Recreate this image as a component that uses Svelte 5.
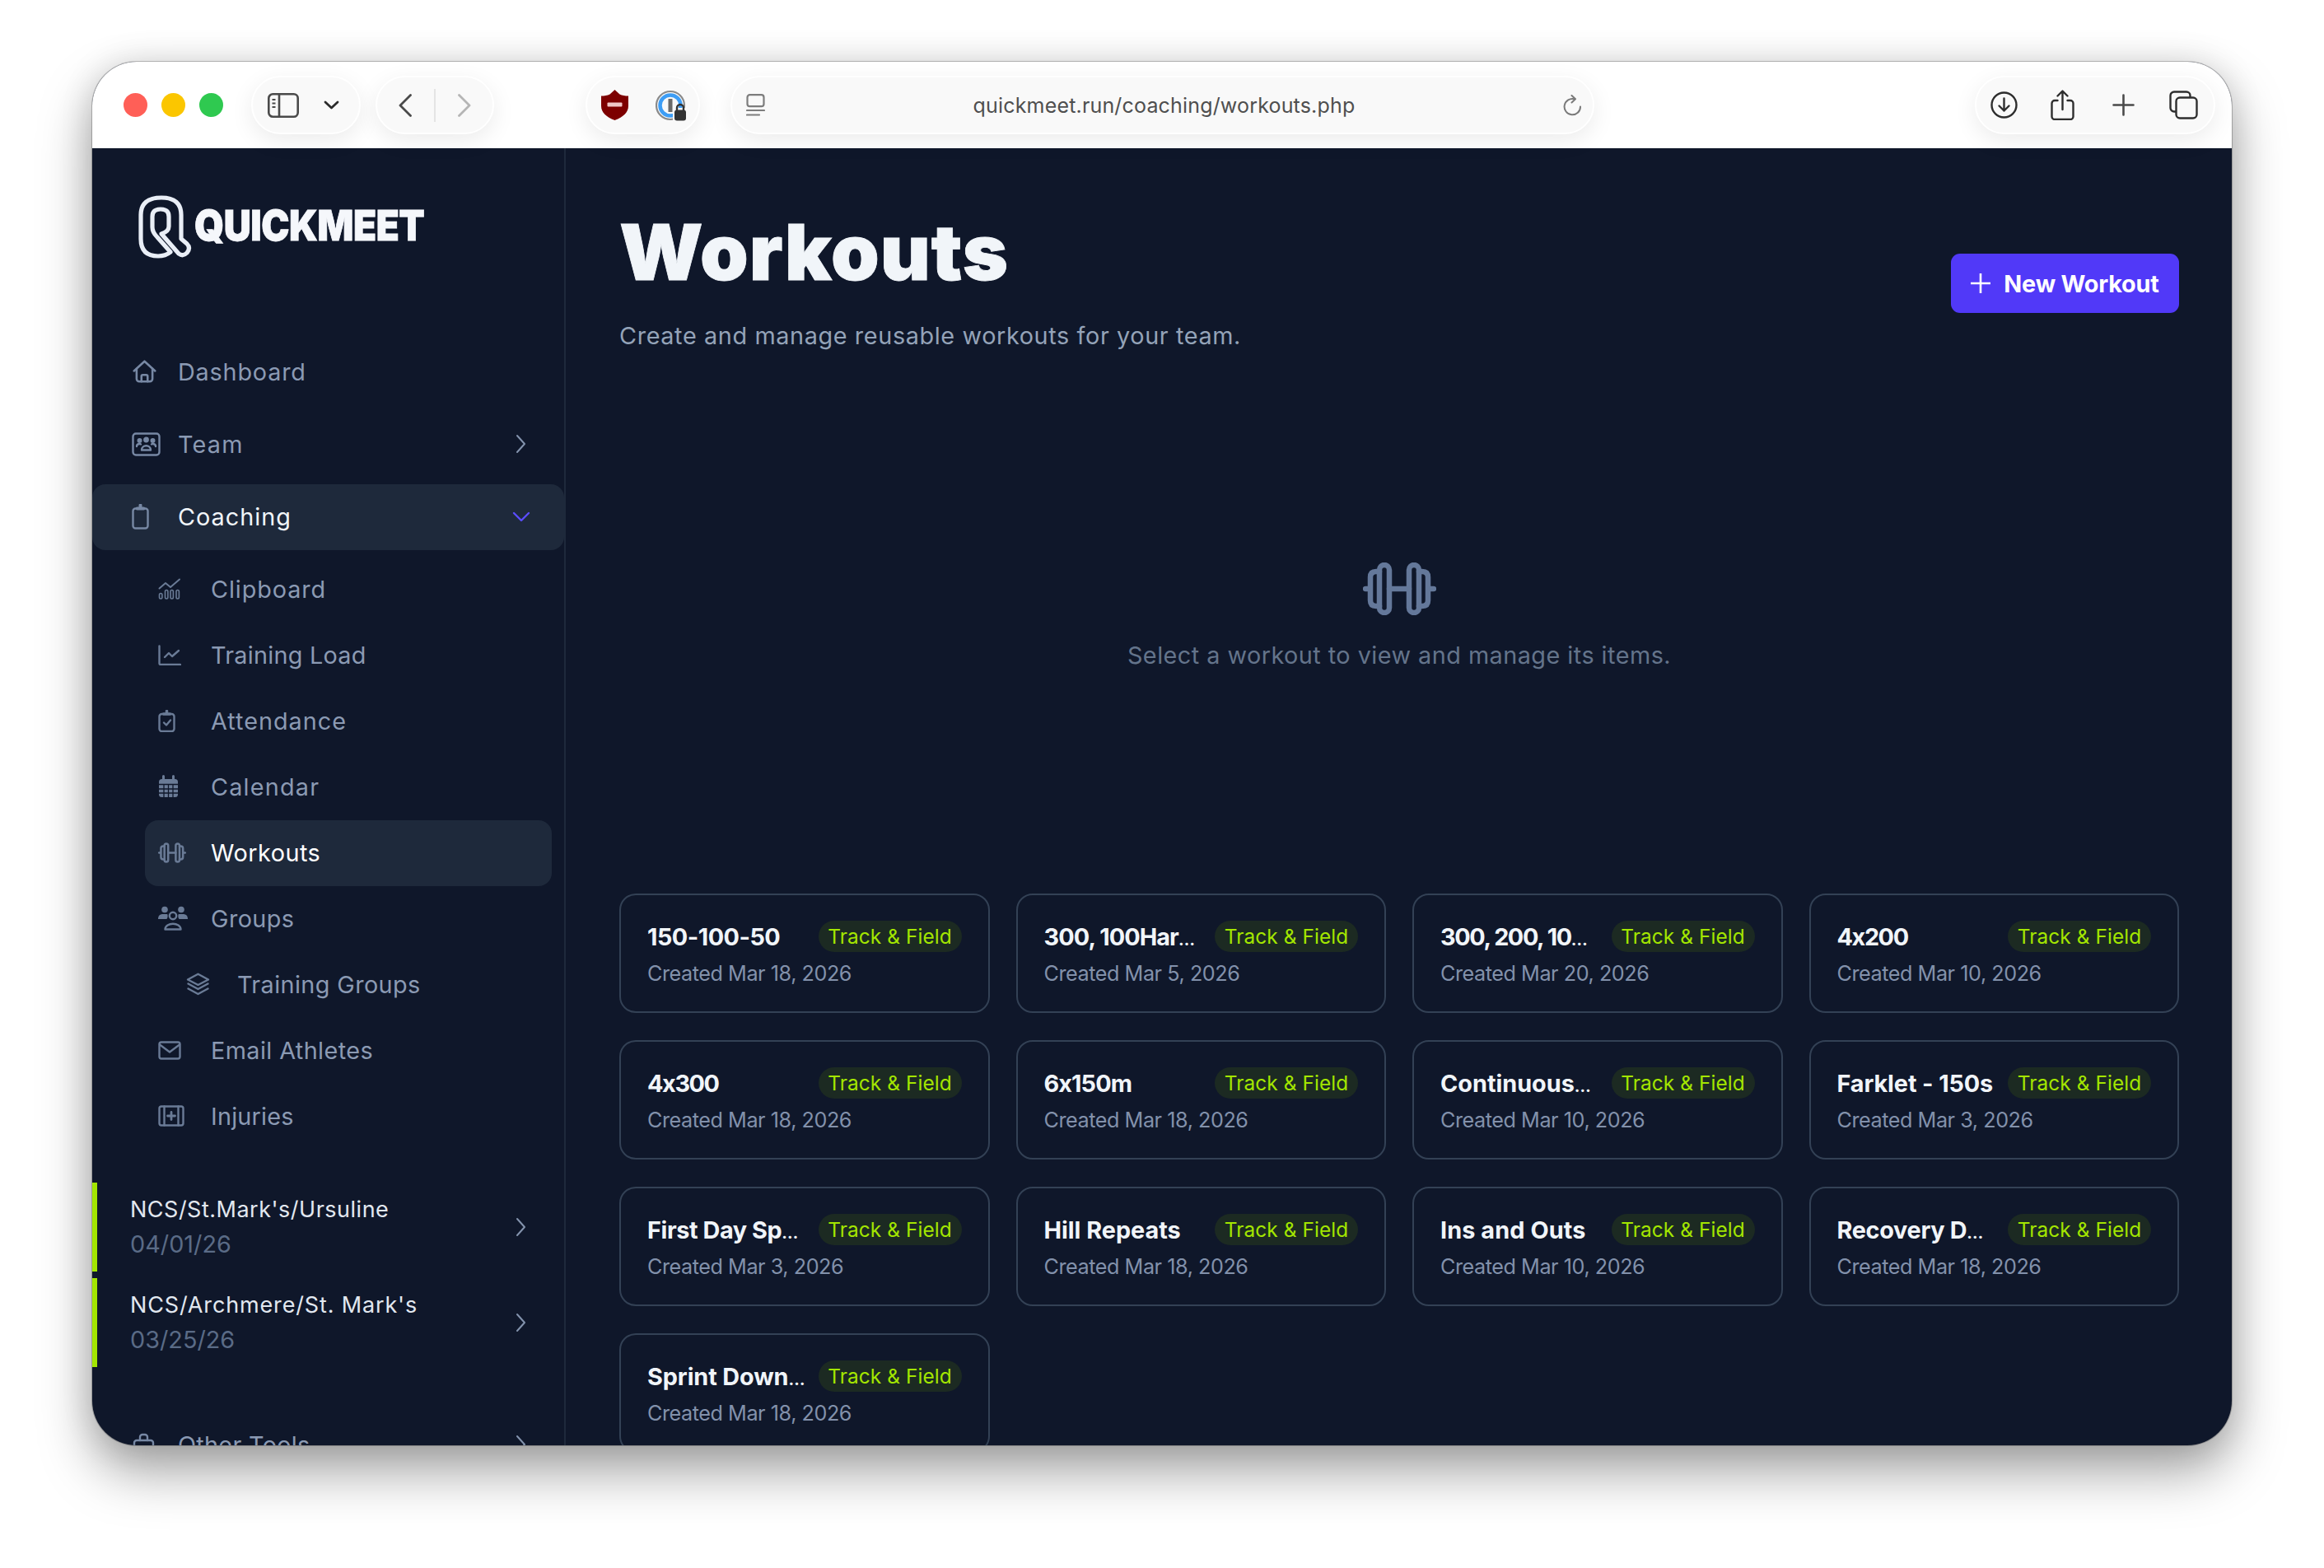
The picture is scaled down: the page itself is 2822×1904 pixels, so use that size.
<script>
  const icons = {
    home: '<path d="M2.500 13.500 14.500 2.500l12 11"/><path d="M5.500 11v11.500a3 3 0 0 0 3 3h12a3 3 0 0 0 3-3V11"/><path d="M11 25.500v-6a1.500 1.500 0 0 1 1.500-1.500h4a1.500 1.500 0 0 1 1.500 1.500v6"/>',
    team: '<rect x="1.500" y="1.500" width="32" height="26" rx="3.500"/><circle cx="17.500" cy="9" r="2.200" fill="currentColor"/><circle cx="9.500" cy="10" r="1.800" fill="currentColor"/><circle cx="25.500" cy="10" r="1.800" fill="currentColor"/><path d="M6 17c0-3 4-3.500 5-2.500M29 17c0-3-4-3.500-5-2.500"/><path d="M12 21.500c0-7 11-7 11 0z"/>',
    coach: '<rect x="1.500" y="5.500" width="18" height="24" rx="3"/><path d="M6.500 5.500h8M10.500 1.500v2.500" stroke-width="4"/>',
    clip: '<path d="M1.500 12.500 9 6l6 5 11-9.500" stroke-width="2" /><rect x="1.500" y="18.500" width="3.400" height="6.500" rx="1.700" stroke-width="1.600"/><rect x="8.500" y="14.500" width="3.400" height="10.500" rx="1.700" stroke-width="1.600"/><rect x="15" y="14.500" width="3.400" height="10.500" rx="1.700" stroke-width="1.600"/><rect x="22" y="14.500" width="3.400" height="10.500" rx="1.700" stroke-width="1.600"/>',
    load: '<path d="M1.500 1.500v21a1.500 1.500 0 0 0 1.500 1.500h24"/><path d="M8 15l5-5 4 4 8-7"/>',
    attend: '<rect x="1.500" y="5" width="18" height="21" rx="3"/><path d="M6.500 5h8M10.500 1.500v2" stroke-width="3.500"/><path d="M7 15.500l3 3 5-6"/>',
    cal: '<rect x="1" y="5" width="23" height="22" rx="3.500" fill="currentColor" stroke="none"/><path d="M6.500 1.500v5M18.500 1.500v5" stroke-width="3"/><path d="M1 11.500h23M1 17h23M1 22h23M7 11.500v15.500M12.500 11.500v15.500M18 11.500v15.500" stroke="#0f172a" stroke-width="1.300" stroke-linecap="butt"/>',
    groups: '<circle cx="8" cy="4.500" r="3.800" fill="currentColor" stroke="none"/><circle cx="28" cy="4.500" r="3.800" fill="currentColor" stroke="none"/><path d="M0 16c0-4 2-6 6-6h5c1 0 1 6-1 6zM36 16c0-4-2-6-6-6h-5c-1 0-1 6 1 6z" fill="currentColor" stroke="none"/><circle cx="18" cy="12" r="4.200"/><path d="M8.500 28.500c0-9 19-9 19 0z" />',
    layers: '<path d="M14.500 1.800 27 8.500l-12.500 6.500L2 8.500z"/><path d="M2.500 13.500l12 6.500 12-6.500"/><path d="M2.500 19.500l12 6.500 12-6.500"/>',
    email: '<rect x="1.500" y="1.500" width="25" height="20" rx="2.500"/><path d="M2 4.500l12 9 12-9"/>',
    injury: '<rect x="1.500" y="1.500" width="29" height="23" rx="2.500"/><path d="M7.500 1.500v23M24.500 1.500v23"/><path d="M16 8.500v9M11.500 13h9" stroke-width="2.800"/>',
    bag: '<path d="M3 12a3 3 0 0 1 3-3h17a3 3 0 0 1 3 3v14H3z"/><path d="M10 9V5a3 3 0 0 1 3-3h3a3 3 0 0 1 3 3v4"/>'
  };
  const dumbbell = '<rect x="20" y="3" width="12" height="58" rx="6"/><rect x="56" y="3" width="12" height="58" rx="6"/><path d="M20 11h-4q-7 0-7 7v28q0 7 7 7h4M68 11h4q7 0 7 7v28q0 7-7 7h-4M32 32h24M3 32h6M79 32h7"/>';
  const chevronRight = '<path d="M2 2l9 10-9 10"/>';

  const subNav = [
    { label: 'Clipboard', icon: 'clip', w: 28, h: 26, ls: 0.9 },
    { label: 'Training Load', icon: 'load', w: 28, h: 25, ls: 0.25 },
    { label: 'Attendance', icon: 'attend', w: 21, h: 27, ls: 1 },
    { label: 'Calendar', icon: 'cal', w: 25, h: 28, ls: 1.2 },
    { label: 'Workouts', icon: 'dumb', w: 34, h: 25, active: true, ls: 0.5 },
    { label: 'Groups', icon: 'groups', w: 36, h: 30, ls: 0.4 },
    { label: 'Training Groups', icon: 'layers', w: 29, h: 28, deep: true, ls: 0.4 },
    { label: 'Email Athletes', icon: 'email', w: 28, h: 23, ls: 0.4 },
    { label: 'Injuries', icon: 'injury', w: 32, h: 26, ls: 0.2 }
  ];
  const meets = [
    { name: "NCS/St.Mark's/Ursuline", date: '04/01/26', ls: 0.5 },
    { name: "NCS/Archmere/St. Mark's", date: '03/25/26', ls: 0.85 }
  ];
  const workouts = [
    ['150-100-50', 'Mar 18, 2026', -0.5],
    ['300, 100Har…', 'Mar 5, 2026', -0.9],
    ['300, 200, 10…', 'Mar 20, 2026', -1.4],
    ['4x200', 'Mar 10, 2026', -1.4],
    ['4x300', 'Mar 18, 2026', -1.4],
    ['6x150m', 'Mar 18, 2026', -0.9],
    ['Continuous…', 'Mar 10, 2026', 0],
    ['Farklet - 150s', 'Mar 3, 2026', -0.1],
    ['First Day Sp…', 'Mar 3, 2026', -0.4],
    ['Hill Repeats', 'Mar 18, 2026', 0],
    ['Ins and Outs', 'Mar 10, 2026', 0.1],
    ['Recovery D…', 'Mar 18, 2026', -0.3],
    ['Sprint Down…', 'Mar 18, 2026', -0.1]
  ];
</script>

<div class="stage">
  <div class="window">
    <header class="toolbar">
      <div class="lights">
        <span class="light red"></span><span class="light yellow"></span><span class="light green"></span>
      </div>
      <div class="pill p1">
        <svg width="38" height="30" viewBox="0 0 38 30" fill="none" stroke="#4a4a4a" stroke-width="2.600">
          <rect x="1.300" y="1.300" width="35.400" height="27.400" rx="5"/><path d="M14 1.300v27.400"/><path d="M5.500 8h4M5.500 12.500h4M5.500 17h4" stroke-width="2"/>
        </svg>
        <svg width="19" height="11" viewBox="0 0 19 11" fill="none" stroke="#2c2c2c" stroke-width="2.800" stroke-linecap="round" stroke-linejoin="round"><path d="M2 2l7.500 7L17 2"/></svg>
      </div>
      <div class="pill p2">
        <svg width="16" height="28" viewBox="0 0 16 28" fill="none" stroke="#4a4a4a" stroke-width="2.800" stroke-linecap="round" stroke-linejoin="round"><path d="M14.500 1.500 2 14l12.500 12.500"/></svg>
        <span class="divider"></span>
        <svg width="16" height="28" viewBox="0 0 16 28" fill="none" stroke="#b5b5b5" stroke-width="2.800" stroke-linecap="round" stroke-linejoin="round"><path d="M1.500 1.500 14 14 1.500 26.500"/></svg>
      </div>
      <div class="pill p3">
        <svg width="33" height="37" viewBox="0 0 33 37">
          <path d="M16.500 0l6 5.500c3 1.500 6.500 2 10.500 2v12c0 8-6 13.500-16.500 17.500C6 33 0 27.500 0 19.500v-12c4 0 7.500-.5 10.500-2z" fill="#7d0000"/>
          <rect x="7.500" y="15.500" width="18" height="5" rx="1" fill="#f0c8c8"/>
        </svg>
        <svg width="38" height="38" viewBox="0 0 38 38" fill="none">
          <circle cx="18" cy="19" r="17" stroke="#8a8a8a" stroke-width="2.200"/>
          <circle cx="18" cy="19" r="12.500" stroke="#3d9df5" stroke-width="4.500"/>
          <rect x="15.500" y="11" width="5" height="16" fill="#6a6a6a"/>
          <rect x="21" y="22" width="17" height="16" fill="#f9f9f9"/>
          <path d="M26 25v-3a4 4 0 0 1 8 0v3" stroke="#333" stroke-width="2.400"/>
          <rect x="23" y="24.500" width="14" height="13" rx="3" fill="#333"/>
        </svg>
      </div>
      <div class="pill p4">
        <svg width="23" height="27" viewBox="0 0 23 27" fill="none" stroke="#7d7d7d" stroke-width="2.200" stroke-linecap="round">
          <rect x="1.500" y="1.200" width="20" height="14" rx="3"/><path d="M1 20h21M1 25.500h15"/>
        </svg>
        <span class="url">quickmeet.run/coaching/workouts.php</span>
        <svg width="23" height="26" viewBox="0 0 23 26" fill="none" stroke="#7a7a7a" stroke-width="2" stroke-linecap="round" stroke-linejoin="round">
          <path d="M14 5.300A9.700 9.700 0 1 0 21 14.500"/><path d="M10.500 1l4.500 4.300-4.500 4.200"/>
        </svg>
      </div>
      <div class="pill p5">
        <svg width="33" height="33" viewBox="0 0 33 33" fill="none" stroke="#2e2e2e" stroke-width="2.400" stroke-linecap="round" stroke-linejoin="round">
          <circle cx="16.500" cy="16.500" r="15"/><path d="M16.500 8.500v15M10.500 17.500l6 6 6-6"/>
        </svg>
        <svg width="29" height="37" viewBox="0 0 29 37" fill="none" stroke="#2e2e2e" stroke-width="2.400" stroke-linecap="round" stroke-linejoin="round">
          <path d="M14.500 24V2M8.500 7.500l6-6 6 6"/><path d="M8.500 13H5a3.500 3.500 0 0 0-3.500 3.500v16A3.500 3.500 0 0 0 5 36h19a3.500 3.500 0 0 0 3.500-3.500v-16A3.500 3.500 0 0 0 24 13h-3.500"/>
        </svg>
        <svg width="27" height="27" viewBox="0 0 27 27" fill="none" stroke="#4a4a4a" stroke-width="2.600" stroke-linecap="round"><path d="M13.500 1.500v24M1.500 13.500h24"/></svg>
        <svg width="35" height="35" viewBox="0 0 35 35" fill="none" stroke="#2e2e2e" stroke-width="2.400" stroke-linejoin="round">
          <rect x="8.500" y="8.500" width="25" height="25" rx="4.500"/><path d="M8.500 25.500H6A4.500 4.500 0 0 1 1.500 21V6A4.500 4.500 0 0 1 6 1.500h15A4.500 4.500 0 0 1 25.500 6v2.500"/>
        </svg>
      </div>
    </header>

    <div class="body">
      <aside class="sidebar">
        <div class="logo">
          <svg width="80" height="90" viewBox="0 0 80 90" fill="none" stroke="#e9eef6" stroke-width="5.200" stroke-linecap="round" stroke-linejoin="round">
            <path d="M47 76L31 58Q25 52 25 46V33Q25 24 35 24Q45 24 45 33V45Q45 51 36 54L57 78Q62 82 67 77Q72 71 67 66L60 60V31Q60 10 36 10Q11 10 11 31V60Q11 81 32 81Q41 81 47 76"/>
          </svg>
          <span class="wordmark">QUICKMEET</span>
        </div>

        <nav class="nav">
          <a class="row top" style="--ls:0.8px">
            <span class="slot"><svg class="ic" width="31" height="30" viewBox="0 0 29 28">{@html icons.home}</svg></span>
            <span>Dashboard</span>
          </a>
          <a class="row top" style="--ls:1.2px">
            <span class="slot"><svg class="ic" width="35" height="29" viewBox="0 0 35 29">{@html icons.team}</svg></span>
            <span>Team</span>
            <svg class="chev" width="13" height="24" viewBox="0 0 13 24">{@html chevronRight}</svg>
          </a>
          <a class="row top open" style="--ls:1px">
            <span class="slot"><svg class="ic" width="21" height="31" viewBox="0 0 21 31">{@html icons.coach}</svg></span>
            <span>Coaching</span>
            <svg class="chevd" width="22" height="13" viewBox="0 0 22 13"><path d="M2 2l9 9 9-9"/></svg>
          </a>
          <div class="sub">
            {#each subNav as item}
              <a class="row" class:active={item.active} class:deep={item.deep} style="--ls:{item.ls}px">
                <span class="slot">
                  <svg class="ic dim" class:db={item.icon === 'dumb'} width={item.w} height={item.h}
                    viewBox={item.icon === 'dumb' ? '0 0 89 64' : `0 0 ${item.w} ${item.h}`}>
                    {@html item.icon === 'dumb' ? dumbbell : icons[item.icon]}
                  </svg>
                </span>
                <span>{item.label}</span>
              </a>
            {/each}
          </div>
          <div class="meets">
            {#each meets as meet}
              <a class="meet">
                <span class="meet-text">
                  <span class="meet-name" style="--ls:{meet.ls}px">{meet.name}</span>
                  <span class="meet-date">{meet.date}</span>
                </span>
                <svg class="chev" width="13" height="24" viewBox="0 0 13 24">{@html chevronRight}</svg>
              </a>
            {/each}
          </div>
          <a class="row top other" style="--ls:0.3px">
            <span class="slot"><svg class="ic" width="29" height="28" viewBox="0 0 29 28">{@html icons.bag}</svg></span>
            <span>Other Tools</span>
            <svg class="chev" width="13" height="24" viewBox="0 0 13 24">{@html chevronRight}</svg>
          </a>
        </nav>
      </aside>

      <main class="main">
        <div class="head">
          <div>
            <h1>Workouts</h1>
            <p class="lead">Create and manage reusable workouts for your team.</p>
          </div>
          <button class="new">
            <svg width="24" height="24" viewBox="0 0 24 24" fill="none" stroke="#fff" stroke-width="2.600"><path d="M12 0v24M0 12h24"/></svg>
            New Workout
          </button>
        </div>

        <div class="empty">
          <svg width="89" height="64" viewBox="0 0 89 64" fill="none" stroke="#64789a" stroke-width="6.500" stroke-linecap="round" stroke-linejoin="round">{@html dumbbell}</svg>
          <p>Select a workout to view and manage its items.</p>
        </div>

        <div class="grid">
          {#each workouts as [name, date, ls]}
            <div class="card">
              <div class="card-top">
                <span class="card-name" style="--ls:{ls}px">{#if name.endsWith('…')}{name.slice(0, -1)}<span class="dots">…</span>{:else}{name}{/if}</span>
                <span class="badge">Track &amp; Field</span>
              </div>
              <div class="card-date">Created {date}</div>
            </div>
          {/each}
        </div>
      </main>
    </div>
  </div>
</div>

<style>
  :global(body) {
    margin: 0;
    background: #fff;
    font-family: Inter, "Noto Sans", "Liberation Sans", sans-serif;
  }
  .stage {
    width: 2822px;
    height: 1904px;
    padding: 75px 0 0 112px;
    box-sizing: border-box;
    overflow: hidden;
  }
  .window {
    width: 2598px;
    height: 1680px;
    border-radius: 54px;
    overflow: hidden;
    display: flex;
    flex-direction: column;
    background: #0f172a;
    box-shadow: 0 0 0 1px rgba(0, 0, 0, 0.22), 0 32px 64px rgba(0, 0, 0, 0.36), 0 0 40px rgba(0, 0, 0, 0.12);
  }

  .toolbar {
    height: 105px;
    flex: none;
    display: flex;
    align-items: center;
    padding: 0 20px 0 38px;
    box-sizing: border-box;
    background: #fff;
  }
  .lights { display: flex; gap: 17px; margin-right: 34px; }
  .light { width: 29px; height: 29px; border-radius: 50%; }
  .red { background: #ff5f57; }
  .yellow { background: #fbc600; }
  .green { background: #2fc950; }
  .pill {
    height: 71px;
    box-sizing: border-box;
    display: flex;
    align-items: center;
    background: #f9f9f9;
    border: 2px solid #fff;
    border-radius: 36px;
    box-shadow: 0 8px 28px rgba(0, 0, 0, 0.08);
    flex: none;
  }
  .p1 { width: 133px; padding-left: 18px; gap: 30px; margin-right: 18px; }
  .p2 { width: 144px; padding-left: 26px; gap: 27px; margin-right: 111px; }
  .divider { width: 2px; height: 40px; background: #e4e4e4; }
  .p3 { width: 139px; padding-left: 17px; gap: 33px; margin-right: 37px; }
  .p4 { width: 1049px; padding: 0 13px 0 17px; }
  .url {
    flex: 1;
    text-align: center;
    font-size: 25px;
    color: #4f4f4f;
    letter-spacing: 0.170px;
  }
  .p5 { width: 292px; padding-left: 17px; gap: 40px; margin-left: auto; }
  .p5 svg:nth-child(3) { margin-left: 6px; }
  .p5 svg:nth-child(4) { margin-left: 2px; }

  .body { flex: 1; min-height: 0; display: flex; }
  .sidebar {
    width: 575px;
    box-sizing: border-box;
    flex: none;
    border-right: 2px solid #1e293b;
    overflow: hidden;
  }
  .logo {
    display: flex;
    height: 232px;
    padding: 50px 0 0 48px;
    box-sizing: border-box;
  }
  .wordmark {
    font-size: 51px;
    font-weight: 900;
    line-height: 50px;
    margin: 19px 0 0 -4px;
    color: #f5f7fb;
    letter-spacing: -0.500px;
    transform: scaleX(0.9);
    transform-origin: left center;
    -webkit-text-stroke: 0.800px #f5f7fb;
  }
  .nav { display: flex; flex-direction: column; }
  .row {
    height: 80px;
    display: flex;
    align-items: center;
    font-size: 28.800px;
    color: #8b9ab3;
    letter-spacing: var(--ls, 0);
    box-sizing: border-box;
    padding-bottom: 2px;
  }
  .top { padding-left: 48px; margin-bottom: 8px; }
  .slot { display: flex; align-items: center; flex: none; width: 56px; }
  .sub .row { padding-left: 16px; margin-left: 64px; width: 494px; border-radius: 16px; }
  .sub .slot { width: 64px; }
  .sub .deep { padding-left: 50px; }
  .sub .deep .slot { width: 62px; }
  .open { background: #1e293b; color: #f1f5f9; border-radius: 16px; width: 573px; }
  .active { background: #1e293b; color: #fff; }
  .ic {
    fill: none;
    stroke: #7788a4;
    color: #7788a4;
    stroke-width: 2.400;
    stroke-linecap: round;
    stroke-linejoin: round;
  }
  .ic.dim { stroke: #6a7b96; color: #6a7b96; }
  .ic.db { stroke-width: 6.500; }
  .chev {
    margin-left: auto;
    margin-right: 46px;
    fill: none;
    stroke: #8393ad;
    stroke-width: 2;
    stroke-linecap: round;
    stroke-linejoin: round;
    flex: none;
  }
  .chevd {
    margin-left: auto;
    margin-right: 41px;
    fill: none;
    stroke: #5b4dff;
    stroke-width: 2.400;
    stroke-linecap: round;
    stroke-linejoin: round;
    flex: none;
  }
  .meets { display: flex; flex-direction: column; gap: 8px; margin: 0 0 55px; padding-top: 40px; }
  .meet {
    height: 108px;
    display: flex;
    align-items: center;
    box-sizing: border-box;
    padding-left: 40px;
    border-left: 6px solid #a3e600;
  }
  .meet-text { display: flex; flex-direction: column; gap: 6px; }
  .meet-name { font-size: 27px; line-height: 36px; color: #e2e8f0; letter-spacing: var(--ls, 0); }
  .meet-date { font-size: 28.800px; line-height: 36px; color: #5a6b86; }
  .other { margin-bottom: 0; }

  .main { flex: 1; min-width: 0; padding: 0 64px 0 65px; overflow: hidden; }
  .head { display: flex; justify-content: space-between; align-items: flex-end; height: 249px; }
  h1 {
    margin: 0;
    font-size: 94px;
    line-height: 118px;
    font-weight: 900;
    letter-spacing: 1px;
    color: #f1f5f9;
    -webkit-text-stroke: 0.800px #f1f5f9;
  }
  .lead {
    margin: 22px 0 0;
    font-size: 28.800px;
    line-height: 42px;
    color: #94a3b8;
    letter-spacing: 0.620px;
  }
  .new {
    width: 277px;
    height: 72px;
    margin-bottom: 49px;
    display: flex;
    align-items: center;
    justify-content: center;
    gap: 16px;
    background: #5139f8;
    border: 0;
    border-radius: 11px;
    font: 700 28.800px Inter, sans-serif;
    letter-spacing: -0.200px;
    color: #fff;
  }
  .empty { display: flex; flex-direction: column; align-items: center; margin-top: 254px; }
  .empty p {
    margin: 28px 0 0;
    font-size: 28.800px;
    line-height: 42px;
    color: #64748b;
    letter-spacing: 0.470px;
  }
  .grid {
    display: grid;
    grid-template-columns: repeat(4, 1fr);
    gap: 33px 32px;
    margin-top: 268px;
  }
  .card {
    height: 145px;
    box-sizing: border-box;
    border: 2px solid #334155;
    border-radius: 20px;
    padding: 31px 32px 0;
  }
  .card-top { display: flex; justify-content: space-between; align-items: center; height: 38px; }
  .card-name { font-size: 28.800px; font-weight: 700; color: #f1f5f9; white-space: nowrap; letter-spacing: var(--ls, 0); }
  .dots { font-size: 20px; letter-spacing: 0; }
  .badge {
    flex: none;
    width: 174px;
    height: 38px;
    display: flex;
    align-items: center;
    justify-content: center;
    border-radius: 19px;
    background: #1c2a22;
    color: #a3e600;
    font-size: 24.400px;
    letter-spacing: 0.100px;
    white-space: nowrap;
  }
  .card-date { margin-top: 8px; font-size: 25.200px; line-height: 36px; color: #8291ab; letter-spacing: -0.450px; }
</style>
